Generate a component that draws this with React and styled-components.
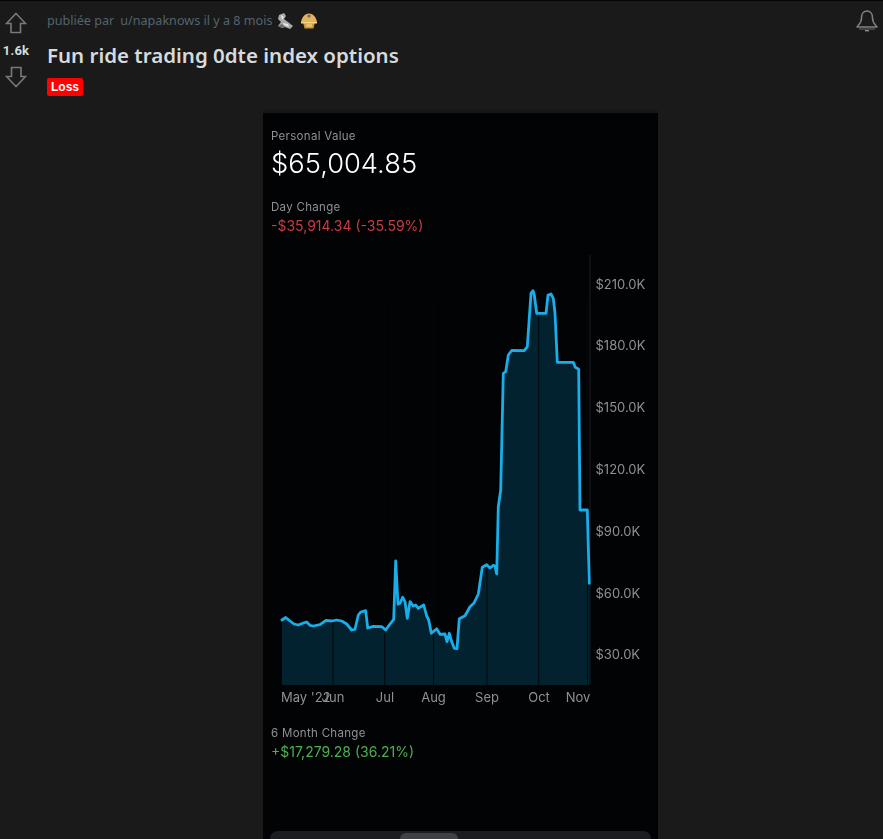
import React from "react";
import styled, { createGlobalStyle } from "styled-components";

const Global = createGlobalStyle`
  html, body { margin: 0; padding: 0; height: 839px; overflow: hidden; background: #1a1a1a; }
  #root { height: 839px; }
`;

const Page = styled.div`
  height: 839px;
  box-sizing: border-box;
  border-top: 1px solid #050505;
  display: grid;
  grid-template-columns: 47px 827px;
  grid-template-rows: 107px 1fr;
  overflow: hidden;
  font-family: "Noto Sans", "Liberation Sans", sans-serif;
`;

const VoteColumn = styled.div`
  display: flex;
  flex-direction: column;
  align-items: center;
  width: 32px;
  padding-top: 11px;
`;

const VoteCount = styled.div`
  font: 700 13px/16px "Roboto", sans-serif;
  color: #d7dadc;
  margin: 9px 0 7px;
  letter-spacing: 0.2px;
`;

const PostHead = styled.div`
  position: relative;
  display: flex;
  flex-direction: column;
  align-items: flex-start;
`;

const Byline = styled.div`
  display: flex;
  align-items: center;
  height: 18px;
  margin-top: 11px;
  font: 400 12.6px/18px "Noto Sans", sans-serif;
  color: #54636e;
  white-space: nowrap;
`;

const User = styled.span`
  margin-left: 6px;
`;

const Awards = styled.span`
  display: inline-flex;
  gap: 6px;
  margin-left: 4px;
`;

const Title = styled.h1`
  margin: 10px 0 0;
  font: 600 20.5px/30px "Noto Sans", sans-serif;
  color: #d7dadc;
  white-space: nowrap;
`;

const Flair = styled.span`
  margin-top: 8px;
  background: #ff0000;
  color: #fff;
  border-radius: 2px;
  font: 700 12px/18px "Liberation Sans", sans-serif;
  padding: 0 4px;
`;

const BellButton = styled.div`
  position: absolute;
  top: 9px;
  right: -4px;
  line-height: 0;
`;

const Spacer = styled.div``;

const Shot = styled.div`
  width: 395px;
  justify-self: center;
  margin-top: 5px;
  background: #020305;
  box-shadow: 0 -4px 0 #171717;
  display: flex;
  flex-direction: column;
  font-family: "Inter", sans-serif;
  overflow: hidden;
  min-height: 0;
  filter: blur(0.3px);
`;

const Stat = styled.div`
  padding: 0 8px;
  margin-top: ${(p) => p.$top}px;
`;

const Label = styled.div`
  font-size: 11.5px;
  line-height: 16px;
  color: #909193;
  letter-spacing: 0.3px;
`;

const BigValue = styled.div`
  font-size: 27.3px;
  font-weight: 300;
  line-height: 32px;
  color: #fff;
  margin-top: 4px;
`;

const Change = styled.div`
  font-size: 14px;
  line-height: 18px;
  margin-top: 2px;
  color: ${(p) => (p.$up ? "#4db050" : "#c83c42")};
`;

const ChartSvg = styled.svg`
  display: block;
  margin-top: 15px;
  flex: none;
`;

const AxisText = styled.text`
  font: 400 13px "Inter", sans-serif;
  fill: #8f9092;
`;

const Segmented = styled.div`
  margin: auto 7px 0;
  height: 6px;
  flex: none;
  background: #1b1d20;
  border-radius: 8px 8px 0 0;
  display: flex;
  justify-content: center;
  padding-top: 2px;
`;

const Thumb = styled.div`
  width: 58px;
  margin-right: 64px;
  background: #3f4144;
  border-radius: 7px 7px 0 0;
`;

const line = [
  [282,620],[285.7,617.5],[290,621],[294,624],[298.3,625],[303.3,623],[306.7,622],[310,625.3],[313.3,626],[320,624.7],[326,620.3],[331.7,621],[336.7,620],[341.7,621],[346.7,624],[351.7,630],[355,629.3],[358.3,615],[360.7,612],[365.7,610.7],[367.7,628],[373.3,626.3],[381.7,626.7],[385.7,630],[389.3,625],[393.7,619.3],[395.7,561],[398,604.3],[400,603.3],[402.7,597.3],[405,601.7],[407.3,618.3],[410,601.7],[413.3,606],[415.7,605],[418.3,608.3],[423.7,605],[426.7,616],[428.7,620],[431.3,633.3],[436.7,628.7],[440,634.3],[445,634],[447,641.7],[449.3,633.3],[451.7,641.7],[454.3,648.3],[457,648.7],[459.3,618.7],[465,615.7],[470,606.7],[474,603],[478.3,594],[482.3,567.3],[486.7,564.7],[490,568],[493.3,565.3],[495,566],[496.7,574],[498.3,506.7],[500.7,490],[503.3,373.3],[505.7,371.7],[508.3,355],[511.7,350.5],[524.3,350.7],[527.3,346.7],[531,293.3],[533,290.7],[534.3,295],[536.7,313.3],[546,313.3],[548,295],[551,294],[553.3,298.3],[555,313],[557.3,362.3],[573.3,362.3],[575.3,367.3],[578.7,369.3],[580,510],[587.3,510],[589.3,583.3],
];
const linePath = line.map(([x, y], i) => `${i ? "L" : "M"}${x} ${y}`).join(" ");
const areaPath = `${linePath} L589.3 685 L282 685 Z`;

const months = [
  ["May '22", 281, "start", null],
  ["Jun", 333, "middle", 333],
  ["Jul", 385, "middle", 384.7],
  ["Aug", 433.5, "middle", 433.5],
  ["Sep", 487, "middle", 487],
  ["Oct", 539, "middle", 538.7],
  ["Nov", 578, "middle", 587.5],
];

const prices = [
  ["$210.0K", 289],
  ["$180.0K", 350],
  ["$150.0K", 412],
  ["$120.0K", 474],
  ["$90.0K", 536],
  ["$60.0K", 598],
  ["$30.0K", 659],
];

function Chart() {
  return (
    <ChartSvg width="395" height="462" viewBox="263 250 395 462">
      <line x1="590" y1="255" x2="590" y2="685" stroke="#1b1f22" />
      <path d={areaPath} fill="#03222f" />
      {months.map(([, , , x]) =>
        x ? <line key={x} x1={x} y1="300" x2={x} y2="685" stroke="#02080c" /> : null
      )}
      <path d={linePath} fill="none" stroke="#19ade9" strokeWidth="2.8" strokeLinejoin="round" strokeLinecap="round" />
      {prices.map(([t, y]) => (
        <AxisText key={t} x="595.5" y={y}>{t}</AxisText>
      ))}
      {months.map(([t, x, a]) => (
        <AxisText key={t} x={x} y="702" textAnchor={a}>{t}</AxisText>
      ))}
    </ChartSvg>
  );
}

const Arrow = ({ down }) => (
  <svg width="22" height="22" viewBox="0 0 22 22" style={down ? { transform: "rotate(180deg)" } : undefined}>
    <path d="M11 1.5 L20.5 11.5 L15.5 11.5 L15.5 20.5 L6 20.5 L6 11.5 L1.5 11.5 Z" fill="none" stroke="#77797b" strokeWidth="1.6" strokeLinejoin="miter" />
  </svg>
);

const Bell = () => (
  <svg width="24" height="24" viewBox="0 0 24 24">
    <path d="M3 17 C3 15.5 7.5 14.5 7.5 8 C7.5 3.5 10 1 13 1 C16 1 18.5 3.5 18.5 8 C18.5 14.5 23 15.5 23 17 Z" fill="none" stroke="#7d8184" strokeWidth="1.5" strokeLinejoin="round" />
    <path d="M5 19 H21" stroke="#66696b" strokeWidth="1" />
    <path d="M11 20.7 H15" stroke="#8a8c8e" strokeWidth="1.4" />
  </svg>
);

const WrenchAward = () => (
  <svg width="18" height="18" viewBox="0 0 18 18">
    <path d="M3 3 L8 1 L10 4 L8 7 L12 10 L17 14 L14 17 L9 15 L6 16 L2 14 L5 10 L2 7 Z" fill="#a9a9a9" />
    <path d="M5 3 L8 5 L6 8 Z M7 11 L12 12 L13 15 L8 13 Z" fill="#e8e8e8" />
    <path d="M2 14 L6 12 L9 15 L6 16 Z" fill="#6b6b6b" />
  </svg>
);

const HelmetAward = () => (
  <svg width="18" height="18" viewBox="0 0 18 18">
    <path d="M1 10 C2 5 5 1.5 9 1.5 C13 1.5 16 5 17 10 Z" fill="#e3b45c" />
    <path d="M3 10 H15 L13.5 16.5 H4.5 Z" fill="#c9963f" />
    <path d="M1 10 H17 V11.5 H1 Z" fill="#f2d48a" />
    <circle cx="9" cy="4" r="1.6" fill="#6d6a62" />
    <path d="M6 12 H12 V15 H6 Z" fill="#e9bd62" />
  </svg>
);

export default function App() {
  return (
    <>
      <Global />
      <Page>
        <VoteColumn>
          <Arrow />
          <VoteCount>1.6k</VoteCount>
          <Arrow down />
        </VoteColumn>
        <PostHead>
          <Byline>
            publiée par <User>u/napaknows il y a 8 mois</User>
            <Awards><WrenchAward /><HelmetAward /></Awards>
          </Byline>
          <Title>Fun ride trading 0dte index options</Title>
          <Flair>Loss</Flair>
          <BellButton><Bell /></BellButton>
        </PostHead>
        <Spacer />
        <Shot>
          <Stat $top={15}>
            <Label>Personal Value</Label>
            <BigValue>$65,004.85</BigValue>
          </Stat>
          <Stat $top={19}>
            <Label>Day Change</Label>
            <Change>-$35,914.34 (-35.59%)</Change>
          </Stat>
          <Chart />
          <Stat $top={13}>
            <Label>6 Month Change</Label>
            <Change $up>+$17,279.28 (36.21%)</Change>
          </Stat>
          <Segmented><Thumb /></Segmented>
        </Shot>
      </Page>
    </>
  );
}
